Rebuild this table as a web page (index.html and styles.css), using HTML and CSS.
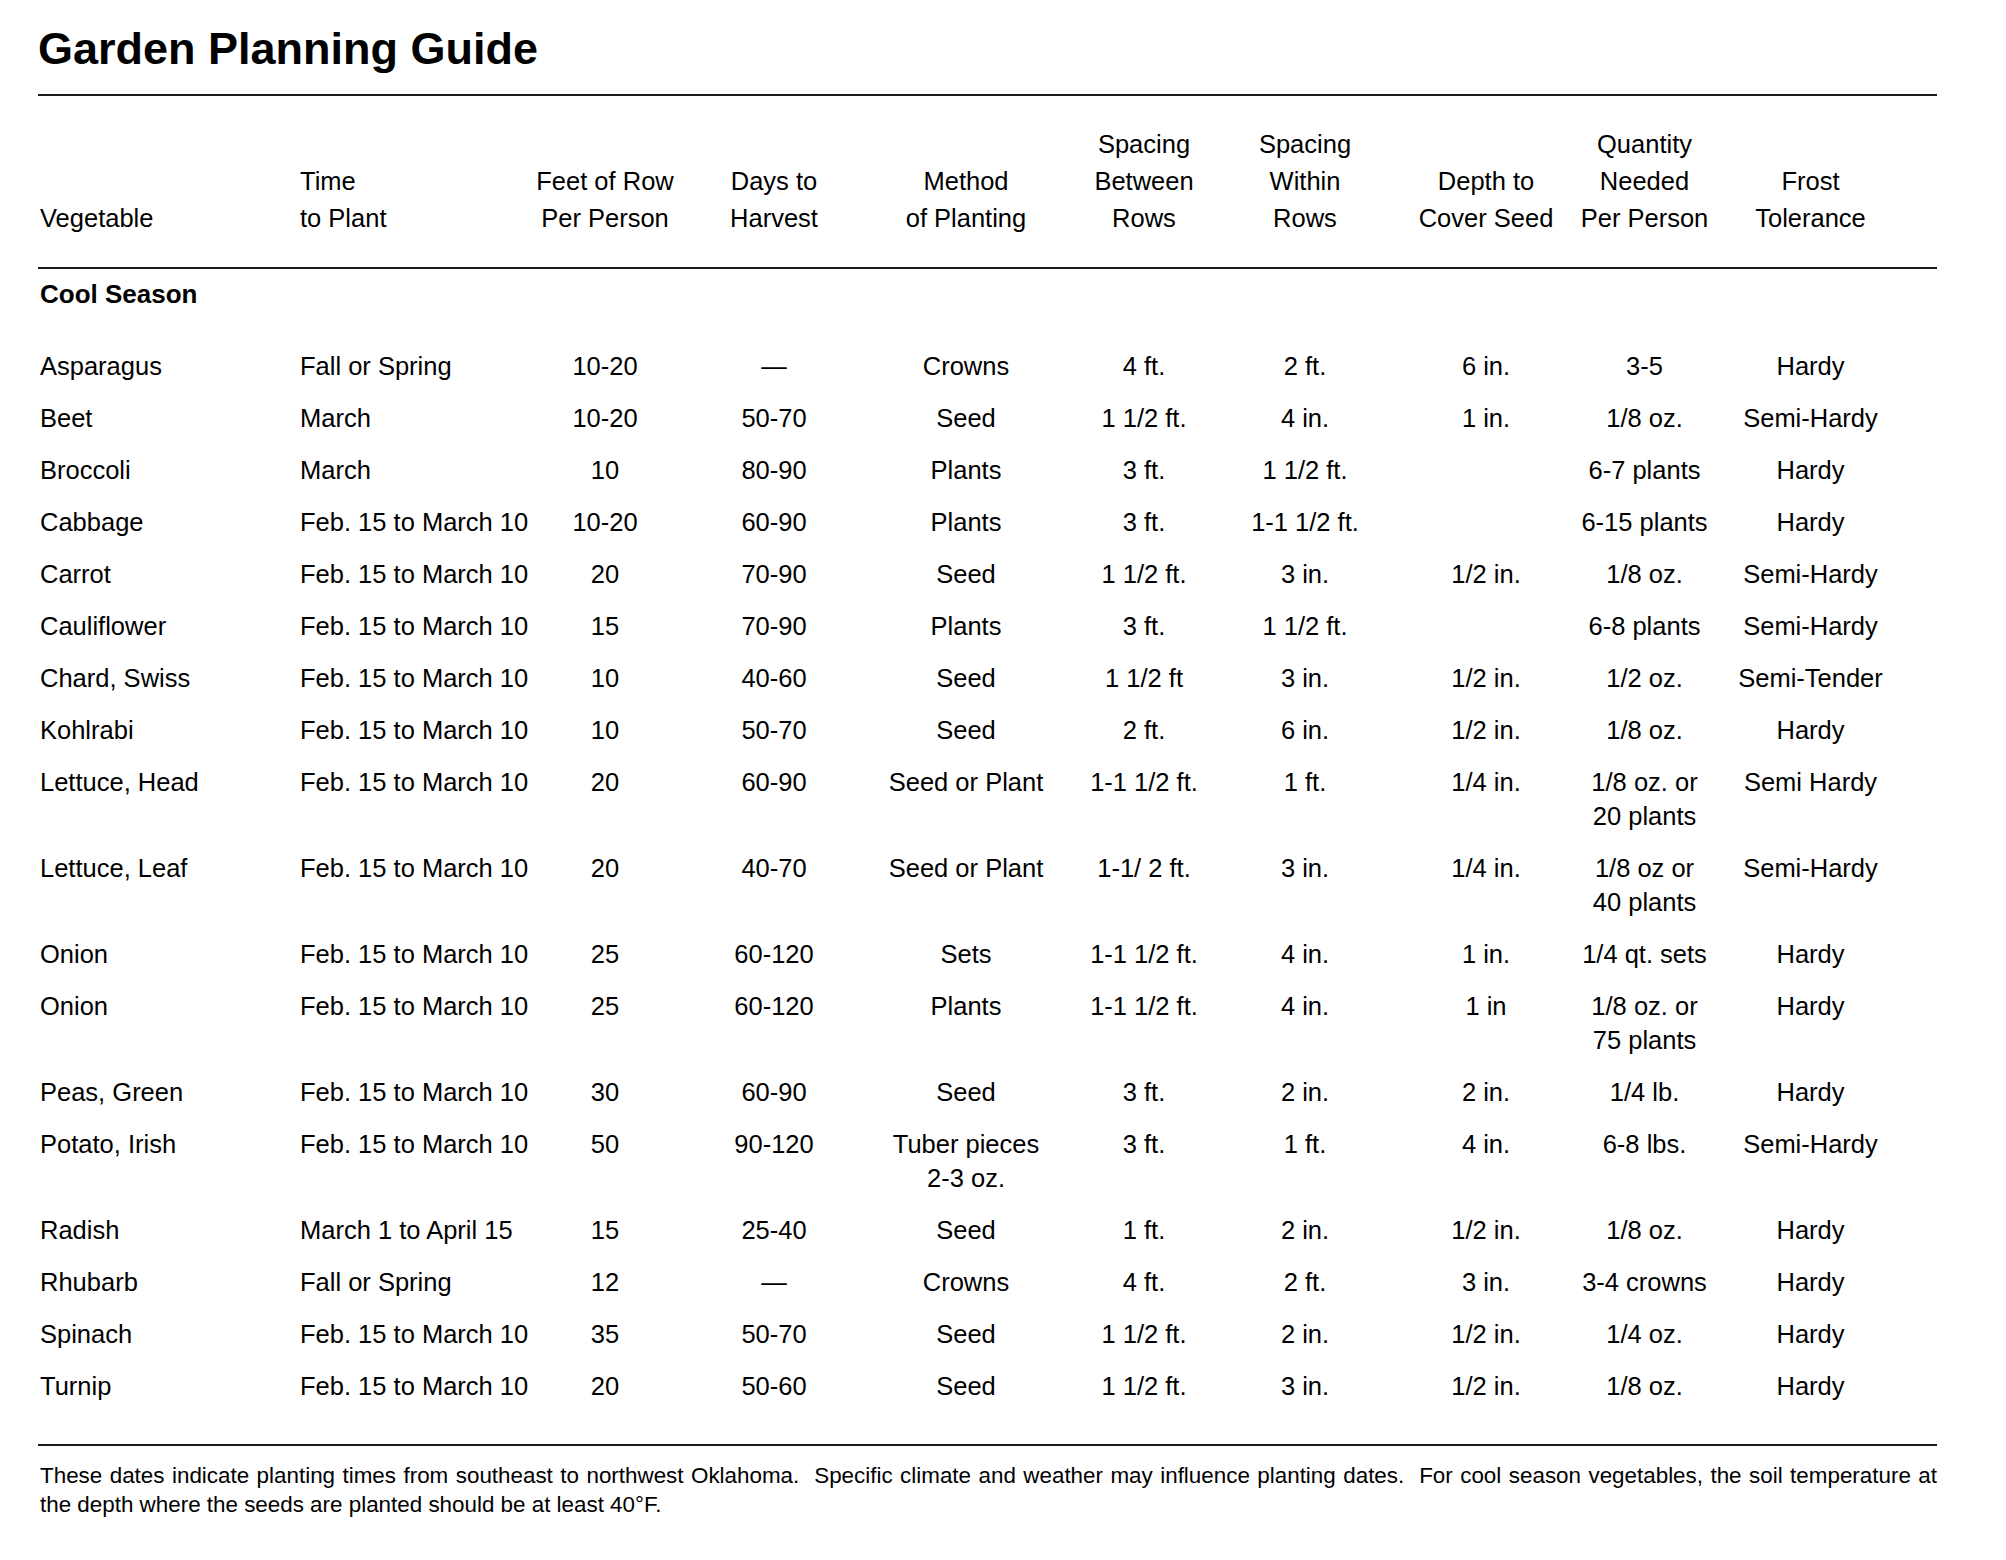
FILE: index.html
```html
<!DOCTYPE html>
<html lang="en">
<head>
<meta charset="utf-8">
<title>Garden Planning Guide</title>
<link rel="stylesheet" href="styles.css">
</head>
<body>
<div class="page">
  <h1 class="title">Garden Planning Guide</h1>
  <div class="rule"></div>
  <div class="row head">
    <div class="l">Vegetable</div>
    <div class="l">Time<br>to Plant</div>
    <div>Feet of Row<br>Per Person</div>
    <div>Days to<br>Harvest</div>
    <div>Method<br>of Planting</div>
    <div>Spacing<br>Between<br>Rows</div>
    <div>Spacing<br>Within<br>Rows</div>
    <div>Depth to<br>Cover Seed</div>
    <div>Quantity<br>Needed<br>Per Person</div>
    <div>Frost<br>Tolerance</div>
  </div>
  <div class="rule"></div>
  <div class="section">Cool Season</div>
  <div class="rows">
    <div class="row"><div class="l">Asparagus</div><div class="l">Fall or Spring</div><div>10-20</div><div>—</div><div>Crowns</div><div>4 ft.</div><div>2 ft.</div><div>6 in.</div><div>3-5</div><div>Hardy</div></div>
    <div class="row"><div class="l">Beet</div><div class="l">March</div><div>10-20</div><div>50-70</div><div>Seed</div><div>1 1/2 ft.</div><div>4 in.</div><div>1 in.</div><div>1/8 oz.</div><div>Semi-Hardy</div></div>
    <div class="row"><div class="l">Broccoli</div><div class="l">March</div><div>10</div><div>80-90</div><div>Plants</div><div>3 ft.</div><div>1 1/2 ft.</div><div></div><div>6-7 plants</div><div>Hardy</div></div>
    <div class="row"><div class="l">Cabbage</div><div class="l">Feb. 15 to March 10</div><div>10-20</div><div>60-90</div><div>Plants</div><div>3 ft.</div><div>1-1 1/2 ft.</div><div></div><div>6-15 plants</div><div>Hardy</div></div>
    <div class="row"><div class="l">Carrot</div><div class="l">Feb. 15 to March 10</div><div>20</div><div>70-90</div><div>Seed</div><div>1 1/2 ft.</div><div>3 in.</div><div>1/2 in.</div><div>1/8 oz.</div><div>Semi-Hardy</div></div>
    <div class="row"><div class="l">Cauliflower</div><div class="l">Feb. 15 to March 10</div><div>15</div><div>70-90</div><div>Plants</div><div>3 ft.</div><div>1 1/2 ft.</div><div></div><div>6-8 plants</div><div>Semi-Hardy</div></div>
    <div class="row"><div class="l">Chard, Swiss</div><div class="l">Feb. 15 to March 10</div><div>10</div><div>40-60</div><div>Seed</div><div>1 1/2 ft</div><div>3 in.</div><div>1/2 in.</div><div>1/2 oz.</div><div>Semi-Tender</div></div>
    <div class="row"><div class="l">Kohlrabi</div><div class="l">Feb. 15 to March 10</div><div>10</div><div>50-70</div><div>Seed</div><div>2 ft.</div><div>6 in.</div><div>1/2 in.</div><div>1/8 oz.</div><div>Hardy</div></div>
    <div class="row"><div class="l">Lettuce, Head</div><div class="l">Feb. 15 to March 10</div><div>20</div><div>60-90</div><div>Seed or Plant</div><div>1-1 1/2 ft.</div><div>1 ft.</div><div>1/4 in.</div><div>1/8 oz. or<br>20 plants</div><div>Semi Hardy</div></div>
    <div class="row"><div class="l">Lettuce, Leaf</div><div class="l">Feb. 15 to March 10</div><div>20</div><div>40-70</div><div>Seed or Plant</div><div>1-1/ 2 ft.</div><div>3 in.</div><div>1/4 in.</div><div>1/8 oz or<br>40 plants</div><div>Semi-Hardy</div></div>
    <div class="row"><div class="l">Onion</div><div class="l">Feb. 15 to March 10</div><div>25</div><div>60-120</div><div>Sets</div><div>1-1 1/2 ft.</div><div>4 in.</div><div>1 in.</div><div>1/4 qt. sets</div><div>Hardy</div></div>
    <div class="row"><div class="l">Onion</div><div class="l">Feb. 15 to March 10</div><div>25</div><div>60-120</div><div>Plants</div><div>1-1 1/2 ft.</div><div>4 in.</div><div>1 in</div><div>1/8 oz. or<br>75 plants</div><div>Hardy</div></div>
    <div class="row"><div class="l">Peas, Green</div><div class="l">Feb. 15 to March 10</div><div>30</div><div>60-90</div><div>Seed</div><div>3 ft.</div><div>2 in.</div><div>2 in.</div><div>1/4 lb.</div><div>Hardy</div></div>
    <div class="row"><div class="l">Potato, Irish</div><div class="l">Feb. 15 to March 10</div><div>50</div><div>90-120</div><div>Tuber pieces<br>2-3 oz.</div><div>3 ft.</div><div>1 ft.</div><div>4 in.</div><div>6-8 lbs.</div><div>Semi-Hardy</div></div>
    <div class="row"><div class="l">Radish</div><div class="l">March 1 to April 15</div><div>15</div><div>25-40</div><div>Seed</div><div>1 ft.</div><div>2 in.</div><div>1/2 in.</div><div>1/8 oz.</div><div>Hardy</div></div>
    <div class="row"><div class="l">Rhubarb</div><div class="l">Fall or Spring</div><div>12</div><div>—</div><div>Crowns</div><div>4 ft.</div><div>2 ft.</div><div>3 in.</div><div>3-4 crowns</div><div>Hardy</div></div>
    <div class="row"><div class="l">Spinach</div><div class="l">Feb. 15 to March 10</div><div>35</div><div>50-70</div><div>Seed</div><div>1 1/2 ft.</div><div>2 in.</div><div>1/2 in.</div><div>1/4 oz.</div><div>Hardy</div></div>
    <div class="row"><div class="l">Turnip</div><div class="l">Feb. 15 to March 10</div><div>20</div><div>50-60</div><div>Seed</div><div>1 1/2 ft.</div><div>3 in.</div><div>1/2 in.</div><div>1/8 oz.</div><div>Hardy</div></div>
  </div>
  <div class="rule rule-bottom"></div>
  <p class="note"><span class="note-line">These dates indicate planting times from southeast to northwest Oklahoma.&nbsp; Specific climate and weather may influence planting dates.&nbsp; For cool season vegetables, the soil temperature at</span> the depth where the seeds are planted should be at least 40°F.</p>
</div>
</body>
</html>
```

FILE: styles.css
```css
html, body {
  margin: 0;
  padding: 0;
  background: #ffffff;
}

body {
  color: #000000;
  font-family: "Liberation Sans", Arial, Helvetica, sans-serif;
}

.page {
  width: 1899px;
  padding: 23px 69px 40px 38px;
}

.title {
  margin: 0 0 19px 0;
  font-size: 45px;
  font-weight: 700;
  line-height: 52px;
}

.rule {
  height: 2px;
  background: #1a1a1a;
}

.row {
  display: grid;
  grid-template-columns: 260px 220px 170px 168px 216px 140px 182px 180px 137px 195px;
  margin-left: 2px;
  padding-bottom: 18px;
  font-size: 25.5px;
  line-height: 34px;
  text-align: center;
  white-space: nowrap;
}

.row .l {
  text-align: left;
}

.head {
  align-items: end;
  padding: 30px 0 30px 0;
  line-height: 37px;
}

.section {
  margin-left: 2px;
  padding: 8px 0 38px 0;
  font-size: 26px;
  font-weight: 700;
  line-height: 34px;
}

.rule-bottom {
  margin-top: 23px;
}

.note {
  margin: 15px 0 0 2px;
  font-size: 22.4px;
  line-height: 29px;
  text-align: left;
}

.note-line {
  display: block;
  white-space: nowrap;
  text-align: justify;
  text-align-last: justify;
}
```
